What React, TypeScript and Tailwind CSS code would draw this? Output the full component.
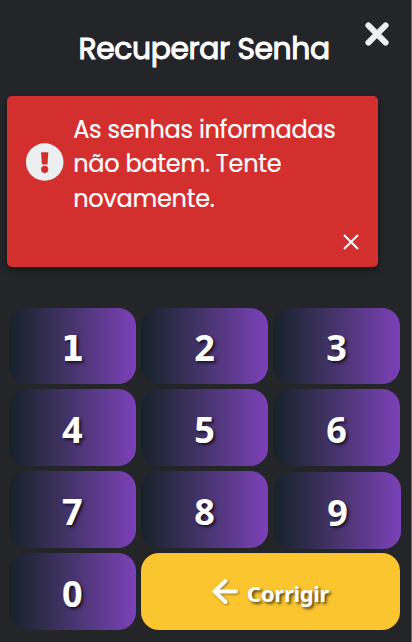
import React from "react";

const poppins = "font-['Poppins','Inter',sans-serif]";
const keyShadow = "[text-shadow:2px_2px_3px_rgba(0,0,0,0.65)]";

function Key({ digit }: { digit: number }) {
  const shift = digit === 9 ? "translate-x-px translate-y-px" : "";
  const face =
    digit === 1
      ? "pt-[6px] font-['DejaVu_Sans_Condensed','DejaVu_Sans',sans-serif] [font-stretch:condensed]"
      : "pt-[4px] font-['Noto_Sans',sans-serif]";
  return (
    <button
      className={`flex items-center justify-center rounded-[18px] bg-linear-to-r from-[#16222a] to-[#7b40b8] text-[36px] leading-none font-bold text-white ${face} ${keyShadow} ${shift}`}
    >
      <span className="block h-[36px] leading-[36px]">{digit}</span>
    </button>
  );
}

export default function App() {
  return (
    <main className="flex h-[642px] w-[412px] flex-col overflow-hidden border-r border-[#68696b] bg-[#232528]">
      <header className="flex h-24 shrink-0 pl-[78.5px]">
        <h1 className={`mt-[29px] w-[252.5px] text-[29.8px] leading-[40px] font-normal tracking-[-0.38px] whitespace-nowrap text-white [-webkit-text-stroke:1px_white] ${poppins}`}>
          Recuperar Senha
        </h1>
        <button aria-label="Fechar" className="mt-[22px] ml-[34px] size-6">
          <svg viewBox="0 0 24 24" className="size-6" stroke="#eceff1" strokeWidth="6" strokeLinecap="round">
            <path d="M3.4 3.4 20.6 20.6M20.6 3.4 3.4 20.6" />
          </svg>
        </button>
      </header>
      <section
        role="alert"
        className="ml-[7px] flex h-[171px] w-[370.5px] shrink-0 rounded-[5px] bg-[#d32f2f] pl-[18.6px] shadow-[0_3px_7px_rgba(0,0,0,0.4)]"
      >
        <svg viewBox="0 0 38 38" className="mt-[47px] size-[38px] shrink-0">
          <circle cx="18.7" cy="19" r="18.8" fill="#eceff1" />
          <path d="M15.1 9.2H22.3L21.5 21.6H15.9Z" fill="#d32f2f" />
          <circle cx="18.7" cy="26.3" r="3.6" fill="#d32f2f" />
        </svg>
        <div className="ml-[9.6px] flex flex-1 flex-col">
          <p className={`mt-[16.5px] text-[24px] leading-[34.5px] font-normal tracking-[-0.27px] whitespace-nowrap text-white [-webkit-text-stroke:0.2px_white] ${poppins}`}>
            <span className="block">As senhas informadas</span>
            <span className="block">não batem. Tente</span>
            <span className="block">novamente.</span>
          </p>
          <button aria-label="Dispensar" className="mt-[18px] mr-[19px] size-4 self-end">
            <svg viewBox="0 0 16 16" className="size-4" stroke="white" strokeWidth="2">
              <path d="M1 1 15 15M15 1 1 15" />
            </svg>
          </button>
        </div>
      </section>
      <section className="mt-[40.5px] ml-[9px] grid h-[322.5px] w-[391px] grid-cols-3 grid-rows-4 gap-[5.3px]">
        {[1, 2, 3, 4, 5, 6, 7, 8, 9, 0].map((digit) => (
          <Key key={digit} digit={digit} />
        ))}
        <button
          className={`col-span-2 flex items-center rounded-[18px] bg-[#fbc530] pl-[71px] font-['Noto_Sans',sans-serif] text-[22px] font-bold tracking-[-0.3px] text-white ${keyShadow}`}
        >
          <svg viewBox="0 0 27 26" className="h-[26px] w-[27px] overflow-visible drop-shadow-[1px_1px_1px_rgba(0,0,0,0.4)]" fill="none" stroke="white" strokeWidth="4" strokeLinecap="round" strokeLinejoin="round">
            <path d="M13.5 2 2.5 12.5 13.5 23M2.5 12.5H24" />
          </svg>
          <span className="mt-[4px] ml-[8px]">Corrigir</span>
        </button>
      </section>
    </main>
  );
}
